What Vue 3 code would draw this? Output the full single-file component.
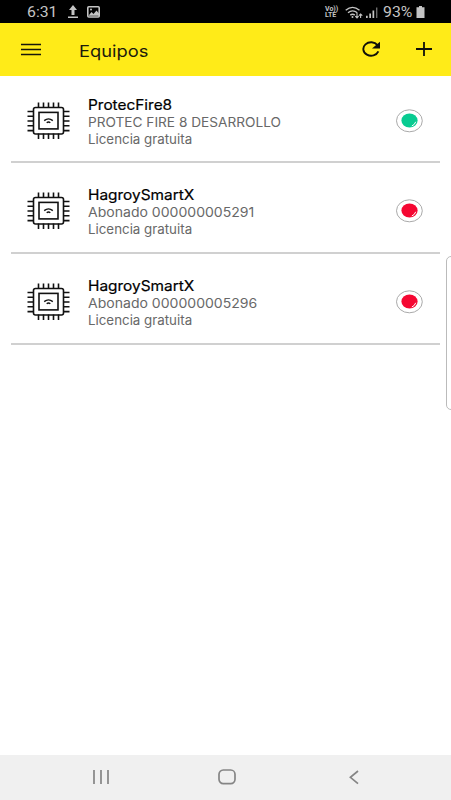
<script setup>
const devices = [
  { name: 'ProtecFire8', detail: 'PROTEC FIRE 8 DESARROLLO', license: 'Licencia gratuita', status: 'online', kind: 'upper' },
  { name: 'HagroySmartX', detail: 'Abonado 000000005291', license: 'Licencia gratuita', status: 'offline', kind: 'number' },
  { name: 'HagroySmartX', detail: 'Abonado 000000005296', license: 'Licencia gratuita', status: 'offline', kind: 'number' },
]
const pinsX = [10.5, 15.5, 20.5, 25.5, 30.5]
const pinsY = [9.5, 14.2, 19, 23.8, 28.6]
</script>

<template>
  <div class="screen">
    <header class="status-bar">
      <span class="clock">6:31</span>
      <svg class="upload" width="12" height="14" viewBox="0 0 12 14"><path d="M6 0 10 5H7.5v5h-3V5H2zM1 11.5h10V13H1z" fill="#c4c4c4" /></svg>
      <svg class="photo" width="13" height="12" viewBox="0 0 13 12">
        <rect x=".8" y=".8" width="11.4" height="10.2" rx="1" fill="none" stroke="#c4c4c4" stroke-width="1.6" />
        <path d="M1.5 9.8 4.5 6l2 2 3-3.6 2.5 3v2.4z" fill="#c4c4c4" /><circle cx="4" cy="3.6" r="1" fill="#c4c4c4" />
      </svg>
      <span class="spacer"></span>
      <span class="volte"><span>Vo))</span><span>LTE</span></span>
      <svg class="wifi" width="18" height="13" viewBox="0 0 18 13" fill="none" stroke="#c4c4c4" stroke-width="1.4">
        <path d="M.7 4.2Q7.5-1.5 14.5 4.2M3 6.7q4.5-3.6 9.3 0M5.3 9.1q2.3-1.8 4.5 0" />
        <circle cx="7.5" cy="11" r="1" fill="#c4c4c4" stroke="none" />
        <path d="M12 7v4.8m-1.7-1.6 1.7 1.7 1.6-1.7M15.6 12V8m-1.6 1.6L15.6 8l1.7 1.6" stroke-width="1.1" />
      </svg>
      <svg class="signal" width="12" height="13" viewBox="0 0 12 13" fill="#c4c4c4"><path d="M0 9.8h1.7V12H0zM3.3 7.5H5V12H3.3zM6.5 4.5h1.7V12H6.5z" /><path d="M10 1.5h1.4V12H10z" opacity=".55" /></svg>
      <span class="percent">93%</span>
      <svg class="battery" width="9" height="12" viewBox="0 0 9 12"><path d="M3 0h3v1.3h2.5V12h-8V1.3H3z" fill="#c4c4c4" /></svg>
    </header>

    <nav class="toolbar">
      <svg class="menu" width="20" height="13" viewBox="0 0 20 13"><path d="M0 1.5h20M0 6.5h20M0 11.5h20" stroke="#17170a" stroke-width="1.6" /></svg>
      <h1>Equipos</h1>
      <span class="spacer"></span>
      <svg class="refresh" width="19" height="17" viewBox="0 0 19 17">
        <path d="M15.5 4.1A7.8 6.7 0 1 0 16.4 10.4" fill="none" stroke="#11110a" stroke-width="1.9" />
        <path d="M18 .7v6.7h-8z" fill="#11110a" />
      </svg>
      <svg class="add" width="16" height="14" viewBox="0 0 16 14"><path d="M8 0v14M0 7h16" stroke="#11110a" stroke-width="1.8" /></svg>
    </nav>

    <main>
      <article v-for="(device, i) in devices" :key="i" class="device">
        <svg class="chip" width="43" height="38" viewBox="0 0 43 38" fill="none" stroke="#111" stroke-width="1.6">
          <path v-for="x in pinsX" :key="'x' + x" :d="`M${x + 1} .5v5m0 26v5.5`" />
          <path v-for="y in pinsY" :key="'y' + y" :d="`M.5 ${y}h6m30 0h6`" />
          <rect x="6.5" y="5.5" width="30" height="26.5" rx="2" />
          <rect x="12" y="10.4" width="19" height="16.5" />
          <path d="M17.2 18.6q4.3-3.4 8.6 0M19.7 20.7q1.8-1.5 3.6 0" stroke-width="1.4" />
        </svg>
        <div class="info">
          <h2><span>{{ device.name }}</span></h2>
          <p><span :class="device.kind">{{ device.detail }}</span></p>
          <p><span>{{ device.license }}</span></p>
        </div>
        <svg :class="['lamp', device.status]" width="27" height="24" viewBox="0 0 27 24">
          <ellipse cx="13.4" cy="11.8" rx="12.9" ry="11" fill="#fff" stroke="#aaa" />
          <ellipse class="bulb" cx="13.5" cy="11.5" rx="8.1" ry="7" />
          <path d="M15.8 17q3-1.2 3.9-4.2" fill="none" stroke="#fff" stroke-width="1" />
        </svg>
      </article>
      <div class="edge-handle"></div>
    </main>

    <footer class="system-nav">
      <svg width="16" height="14" viewBox="0 0 16 14"><path d="M1 0v14M8 0v14M15 0v14" stroke="#858585" stroke-width="1.7" /></svg>
      <svg class="home" width="18" height="16" viewBox="0 0 18 16"><rect x="1" y="1" width="16" height="13.6" rx="4.3" fill="none" stroke="#858585" stroke-width="1.7" /></svg>
      <svg width="10" height="15" viewBox="0 0 10 15"><path d="M9 1 1.4 7.3 9 13.6" fill="none" stroke="#858585" stroke-width="1.7" /></svg>
    </footer>
  </div>
</template>

<style>
body { margin: 0; background: #fff; }
</style>

<style scoped>
.screen { display: flex; flex-direction: column; width: 451px; height: 800px; overflow: hidden; background: #fff; font-family: Inter, sans-serif; }
svg { display: block; flex: none; }
.spacer { flex: 1; }
.status-bar { display: flex; align-items: center; box-sizing: border-box; height: 23px; padding: 1px 26px 0 27px; background: #000; color: #c4c4c4; font-family: Roboto, sans-serif; }
.clock { width: 40px; font-size: 14px; line-height: 20px; transform: scaleX(1.13); transform-origin: left; }
.upload { margin-right: 8px; }
.volte { display: flex; flex-direction: column; width: 14px; font-size: 7px; font-weight: 700; line-height: 6.5px; margin-right: 6px; white-space: nowrap; }
.wifi { margin-right: 3px; }
.signal { margin-right: 5px; }
.percent { width: 33px; font-size: 14.5px; transform: scaleX(1.09); transform-origin: left; }
.toolbar { display: flex; align-items: center; box-sizing: border-box; height: 53px; padding: 0 19px 1px 21px; background: #ffeb18; }
.toolbar h1 { margin: 3px 0 0 38px; font-size: 16.5px; font-weight: 400; line-height: 22px; color: #1c1c0c; transform: scaleX(1.11); transform-origin: left; }
.refresh { margin-right: 35px; }
main { position: relative; flex: 1; padding: 0 11px; }
.device { display: flex; align-items: center; box-sizing: border-box; height: 91px; padding: 6px 17px 0 16px; border-bottom: 2px solid #d0d0d0; }
.device:first-child { height: 87px; padding-top: 4px; }
.info { flex: 1; margin: 2px 0 0 18.3px; white-space: nowrap; }
.info h2, .info p { margin: 0; font-weight: 400; line-height: 17px; font-size: 13px; color: #686868; }
.info h2 { line-height: 19px; font-size: 14px; color: #000; -webkit-text-stroke: 0.2px #000; }
.info span { display: inline-block; transform: scaleX(1.025); transform-origin: left; }
.info h2 span { transform: scaleX(1.1); }
.info .upper { transform: scaleX(1.05); }
.info .number { transform: scaleX(1.08); }
.online .bulb { fill: #08cb91; }
.offline .bulb { fill: #f50732; }
.edge-handle { position: absolute; top: 180px; right: -6px; box-sizing: border-box; width: 11px; height: 154px; border: 1px solid #bbb; border-radius: 5px; background: #fff; }
.system-nav { display: flex; align-items: center; justify-content: space-between; box-sizing: border-box; height: 45px; padding: 0 92px 1px 93px; background: #f0f0f0; }
.home { margin-right: 4px; }
</style>
